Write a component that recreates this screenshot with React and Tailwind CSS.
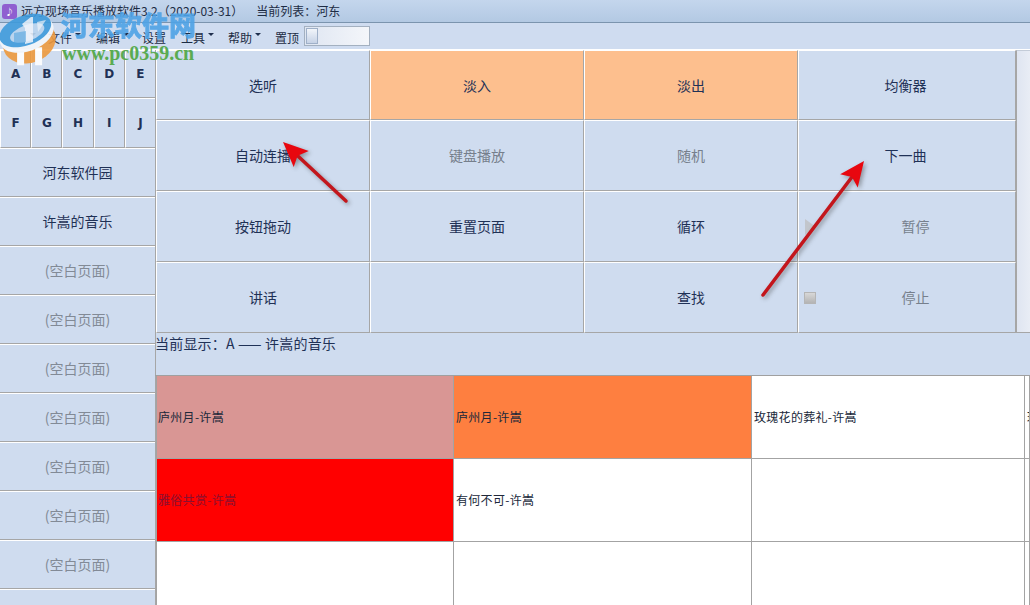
const CJK = '[font-family:"Noto_Sans_CJK_SC","Liberation_Sans",sans-serif]';

const letterRows = [
  ['A', 'B', 'C', 'D', 'E'],
  ['F', 'G', 'H', 'I', 'J'],
];

const pages = [
  { label: '河东软件园' },
  { label: '许嵩的音乐' },
  { label: '(空白页面)', empty: true },
  { label: '(空白页面)', empty: true },
  { label: '(空白页面)', empty: true },
  { label: '(空白页面)', empty: true },
  { label: '(空白页面)', empty: true },
  { label: '(空白页面)', empty: true },
  { label: '(空白页面)', empty: true },
  { label: '', empty: true },
];

const buttons = [
  { label: '选听' },
  { label: '淡入', on: true },
  { label: '淡出', on: true },
  { label: '均衡器', nudge: true },
  { label: '自动连播' },
  { label: '键盘播放', dim: true },
  { label: '随机', dim: true },
  { label: '下一曲', nudge: true },
  { label: '按钮拖动' },
  { label: '重置页面' },
  { label: '循环' },
  { label: '暂停', dim: true, icon: 'play' },
  { label: '讲话' },
  { label: '' },
  { label: '查找' },
  { label: '停止', dim: true, icon: 'stop' },
];

const songs = [
  { name: '庐州月-许嵩', bg: 'bg-[#d99694]' },
  { name: '庐州月-许嵩', bg: 'bg-[#fe7f40]' },
  { name: '玫瑰花的葬礼-许嵩', bg: 'bg-white' },
  { name: '玫', bg: 'bg-white' },
  { name: '雅俗共赏-许嵩', bg: 'bg-[#ff0000]', dim: true },
  { name: '有何不可-许嵩', bg: 'bg-white' },
  { name: '', bg: 'bg-white' },
  { name: '', bg: 'bg-white' },
  { name: '', bg: 'bg-white' },
  { name: '', bg: 'bg-white' },
  { name: '', bg: 'bg-white' },
  { name: '', bg: 'bg-white' },
];

function Caret() {
  return <span className="ml-[3px] mb-[6px] inline-block border-x-[3px] border-t-[3px] border-x-transparent border-t-[#1f2f4d]" />;
}

function Menu({ label, caret, className }) {
  return (
    <div className={`flex items-center pt-[3px] ${className}`}>
      <span>{label}</span>
      {caret && <Caret />}
    </div>
  );
}

function ControlButton({ label, on, dim, icon, nudge }) {
  return (
    <div
      className={`flex items-center border-t border-l border-t-white border-l-white border-r border-b border-r-[#a6a6a6] border-b-[#a6a6a6] text-[14px] ${
        on ? 'bg-[#fdbf8e]' : 'bg-[#cfdcef]'
      } ${dim ? 'text-[#767f8c]' : 'text-[#1f3156]'}`}
    >
      {icon === 'play' && (
        <span className="ml-[6px] h-0 w-0 border-y-[8px] border-l-[11px] border-y-transparent border-l-[#c2c6cc]" />
      )}
      {icon === 'stop' && (
        <span className="ml-[5px] h-[12px] w-[12px] border border-[#b5b5b5] bg-gradient-to-b from-[#d8d8d8] to-[#b4b4b4]" />
      )}
      <span className={`flex-1 text-center ${nudge ? 'pr-[3px]' : ''}`}>{label}</span>
    </div>
  );
}

function Logo() {
  return (
    <svg width="60" height="66" viewBox="0 0 60 66" className="absolute left-0 top-0 opacity-90">
      <g transform="rotate(-20 28 38)">
        <ellipse cx="28" cy="42" rx="27" ry="21" fill="#ee9a3e" />
        <path d="M13 48 L13 66 L20 66 L20 48 Z M31 48 L31 66 L38 66 L38 48 Z" fill="#ffffff" transform="rotate(20 28 50)" />
        <ellipse cx="28" cy="34" rx="28" ry="17" fill="#f4f7fb" />
        <ellipse cx="28" cy="30" rx="27" ry="15" fill="#3f9bdc" />
        <ellipse cx="29" cy="33" rx="18" ry="8" fill="#b9d4ee" />
      </g>
      <path d="M22 24 L31 17 L33 17 L33 42 L25 44 L25 28 Z" fill="#f4f7fb" opacity="0.85" />
      <path d="M37 22 L46 20 L38 32 Z" fill="#f4f7fb" opacity="0.7" />
      <path d="M14 33 L26 31 L26 42 L14 44 Z" fill="#3f9bdc" opacity="0.55" />
    </svg>
  );
}

function Arrow({ x1, y1, x2, y2 }) {
  const dx = x2 - x1;
  const dy = y2 - y1;
  const len = Math.hypot(dx, dy);
  const ux = dx / len;
  const uy = dy / len;
  const baseX = x2 - ux * 25;
  const baseY = y2 - uy * 25;
  const notchX = x2 - ux * 20;
  const notchY = y2 - uy * 20;
  const head = `${x2},${y2} ${baseX - uy * 11},${baseY + ux * 11} ${notchX},${notchY} ${baseX + uy * 11},${baseY - ux * 11}`;
  return (
    <g>
      <line x1={x1} y1={y1} x2={notchX} y2={notchY} stroke="#c3161c" strokeWidth="3.5" strokeLinecap="round" />
      <polygon points={head} fill="#e8070f" />
    </g>
  );
}

export default function App() {
  return (
    <div className={`relative flex h-[605px] w-[1030px] flex-col overflow-hidden bg-[#cfdcef] text-[12px] text-[#1f3156] ${CJK}`}>
      {/* title bar */}
      <div className="flex h-[23px] shrink-0 items-center border-b border-b-[#7b94ae] bg-gradient-to-b from-[#c4d6ed] to-[#b3c9e3] pl-[2px]">
        <div className="flex h-[15px] w-[15px] items-center justify-center rounded-[3px] bg-[#8f5fd0] text-[9px] leading-none text-white">♪</div>
        <span className="ml-[4px] text-[#1d2c44]">远方现场音乐播放软件3.2（2020-03-31）</span>
        <span className="ml-[13px] text-[#1d2c44]">当前列表：河东</span>
      </div>

      {/* menu bar */}
      <div className="flex h-[27px] shrink-0 items-center border-b border-b-white bg-[#cfdcf0] text-[#1d2c44]">
        <Menu label="" caret className="ml-[27px] w-[21px]" />
        <Menu label="文件" caret className="w-[48px]" />
        <Menu label="编辑" caret className="w-[46px]" />
        <Menu label="设置" className="w-[39px]" />
        <Menu label="工具" caret className="w-[47px]" />
        <Menu label="帮助" caret className="w-[47px]" />
        <Menu label="置顶" className="w-[29px]" />
        <div className="flex h-[20px] w-[66px] items-center border border-[#a3b0c0] bg-gradient-to-r from-[#dfe6f2] to-[#f4f6fa] pl-[1px]">
          <div className="h-[16px] w-[12px] border border-[#9fb0c8] bg-gradient-to-b from-[#f2f5fa] to-[#c6d2e6]" />
        </div>
      </div>

      <div className="flex min-h-0 flex-1">
        {/* left page list */}
        <aside className="flex w-[156px] shrink-0 flex-col border-r border-r-[#a6a6a6]">
          {letterRows.map((row, i) => (
            <div key={i} className={`flex shrink-0 ${i === 0 ? 'h-[48px]' : 'h-[50px]'}`}>
              {row.map((letter) => (
                <div
                  key={letter}
                  className='flex flex-1 items-center justify-center border-l border-r border-b border-t border-l-white border-r-[#a6a6a6] border-b-[#a6a6a6] border-t-white font-["DejaVu_Sans",sans-serif] text-[12px] font-bold text-[#1f3156] last:border-r-0'
                >
                  {letter}
                </div>
              ))}
            </div>
          ))}
          {pages.map((page, i) => (
            <div
              key={i}
              className={`flex h-[49px] shrink-0 items-center justify-center border-t border-b border-t-white border-b-[#a6a6a6] text-[14px] ${
                page.empty ? 'text-[#828a96]' : 'text-[#1f3156]'
              }`}
            >
              {page.label}
            </div>
          ))}
        </aside>

        <main className="flex min-w-0 flex-1 flex-col">
          {/* control buttons */}
          <div className="flex h-[283px] shrink-0">
            <div className="grid w-[860px] shrink-0 grid-cols-[214px_214px_214px_218px] grid-rows-[70px_71px_71px_71px]">
              {buttons.map((b, i) => (
                <ControlButton key={i} {...b} />
              ))}
            </div>
            <div className="flex-1 border-t border-l border-b border-t-[#c4ccd8] border-l-[#a6a6a6] border-b-[#a6a6a6] bg-gradient-to-r from-[#dfe5f1] to-[#e9edf5]" />
          </div>

          {/* current page label */}
          <div className="-ml-px h-[43px] shrink-0 border-b border-b-[#a0a0a0] text-[14px] leading-[21px] tracking-[0.2px] text-[#1f3156]">
            当前显示：A —— 许嵩的音乐
          </div>

          {/* song grid */}
          <div className="grid min-h-0 flex-1 grid-cols-[298px_298px_273px_1fr] grid-rows-[83px_83px_83px] overflow-hidden bg-white">
            {songs.map((song, i) => (
              <div
                key={i}
                className={`flex items-center overflow-hidden whitespace-nowrap border-r border-b border-r-[#a3a3a3] border-b-[#a3a3a3] tracking-[0.3px] ${
                  i % 4 === 0 ? 'border-l border-l-[#a3a3a3] pl-[1px]' : 'pl-[2px]'
                } ${song.bg} ${song.dim ? 'text-[#8a1030]' : 'text-[#20283a]'}`}
              >
                {song.name}
              </div>
            ))}
          </div>
        </main>
      </div>

      {/* annotation arrows */}
      <svg width="1030" height="605" className="pointer-events-none absolute left-0 top-0 drop-shadow-[2px_2px_2px_rgba(60,60,60,0.45)]">
        <Arrow x1={346} y1={201} x2={283} y2={142} />
        <Arrow x1={763} y1={295} x2={864} y2={161} />
      </svg>

      {/* site watermark */}
      <div className="pointer-events-none absolute left-0 top-0 h-[66px] w-[200px]">
        <Logo />
        <div className="absolute left-[61px] top-[7px] whitespace-nowrap text-[27px] font-bold leading-[36px] text-[#4fa3e6] opacity-90 [-webkit-text-stroke:1px_#4fa3e6]">
          河东软件网
        </div>
        <div className='absolute left-[62px] top-[42px] whitespace-nowrap font-["Liberation_Serif",serif] text-[20px] font-bold leading-[22px] text-[#5aab52]'>
          www.pc0359.cn
        </div>
      </div>
    </div>
  );
}
